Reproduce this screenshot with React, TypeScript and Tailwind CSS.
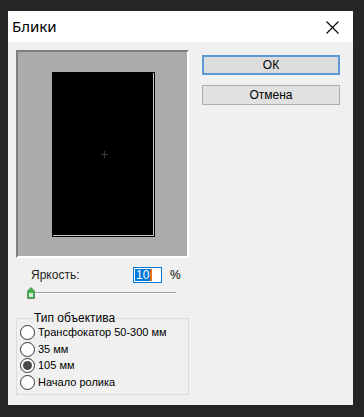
import React from 'react';

const ui = { fontFamily: '"Liberation Sans", Arial, sans-serif' };
const title = { fontFamily: '"Noto Sans", "DejaVu Sans", sans-serif' };

function Radio({ label, checked }: { label: string; checked?: boolean }) {
  return (
    <div className="flex items-center h-[16.7px]">
      <span className="w-[15px] h-[15px] rounded-full border border-[#333] bg-white flex items-center justify-center shrink-0">
        {checked && <span className="w-[9px] h-[9px] rounded-full bg-[#4a4a4a]" />}
      </span>
      <span className="ml-[3px] text-[11px] text-black leading-none">{label}</span>
    </div>
  );
}

export default function App() {
  return (
    <div className="w-[364px] h-[417px] bg-[#252525] pt-[11px] pl-[8px]" style={ui}>
      <div className="w-[345px] h-[394px] bg-[#f0f0f0] flex flex-col">
        {/* title bar */}
        <div className="h-[31px] bg-white flex items-center justify-between pl-[4px] pr-[14px]">
          <span className="text-[15px] text-black" style={title}>Блики</span>
          <svg width="13" height="13" viewBox="0 0 13 13" className="mt-[1px]">
            <path d="M0.5 0.5 L12.5 12.5 M12.5 0.5 L0.5 12.5" stroke="#000" strokeWidth="1.1" />
          </svg>
        </div>

        <div className="flex pl-[8px] pt-[8px]">
          {/* left column */}
          <div className="w-[173px] flex flex-col">
            <div className="h-[208px] bg-[#ababab] border-l-2 border-t-2 border-l-[#7f7f7f] border-t-[#7f7f7f] border-r-2 border-b-2 border-r-white border-b-white flex justify-center pt-[20px] pl-[2px]">
              <div className="w-[103px] h-[165px] bg-black p-[1px] flex">
                <div className="flex-1 border-r border-b border-[#c8c8c8] relative">
                  <svg width="7" height="7" viewBox="0 0 7 7" className="absolute left-[48px] top-[78px]">
                    <path d="M3.5 0 V7 M0 3.5 H7" stroke="#3a3a3a" strokeWidth="1" />
                  </svg>
                </div>
              </div>
            </div>

            <div className="flex items-center h-[16px] mt-[9px] pl-[15px] text-[12px]">
              <span className="text-[#222] w-[102px]">Яркость:</span>
              <span className="w-[29px] h-[16px] border border-[#0078d7] bg-white flex items-center pl-[1px]">
                <span className="bg-[#0078d7] text-white leading-[12px] px-[1px]">10</span>
                <span className="w-[2px] h-[12px] bg-[#e07020]" />
              </span>
              <span className="ml-[8px] text-black">%</span>
            </div>

            <div className="relative h-[14px] mt-[3px] ml-[11px] w-[149px]">
              <div className="absolute left-[4px] right-0 top-[6px] h-[1px] bg-[#a0a0a0]" />
              <div className="absolute left-[4px] right-0 top-[7px] h-[1px] bg-white" />
              <svg width="8" height="12" viewBox="0 0 8 12" className="absolute left-0 top-[1px]">
                <path d="M4 0.5 L7.5 4 L7.5 11.5 L0.5 11.5 L0.5 4 Z" fill="#3cb44b" stroke="#6a8a6a" strokeWidth="1" />
                <path d="M2 6 L6 6 L6 10 L2 10 Z" fill="#d8f0d8" />
              </svg>
            </div>

            <div className="relative mt-[18px] h-[77px] border border-[#dcdcdc] pt-[5px] pl-[3px]">
              <span className="absolute left-[16px] -top-[7px] bg-[#f0f0f0] px-[1px] text-[12px] leading-[12px] text-black">Тип объектива</span>
              <Radio label="Трансфокатор 50-300 мм" />
              <Radio label="35 мм" />
              <Radio label="105 мм" checked />
              <Radio label="Начало ролика" />
            </div>
          </div>

          {/* right column */}
          <div className="ml-[13px] pt-[5px] flex flex-col gap-[10px]">
            <button className="w-[138px] h-[20px] bg-[#dcdcdc] border-2 border-[#5b9bd5] text-[12px] text-black leading-none flex items-center justify-center">
              ОК
            </button>
            <button className="w-[138px] h-[20px] bg-[#e1e1e1] border border-[#adadad] text-[12px] text-black leading-none flex items-center justify-center">
              Отмена
            </button>
          </div>
        </div>
      </div>
    </div>
  );
}
